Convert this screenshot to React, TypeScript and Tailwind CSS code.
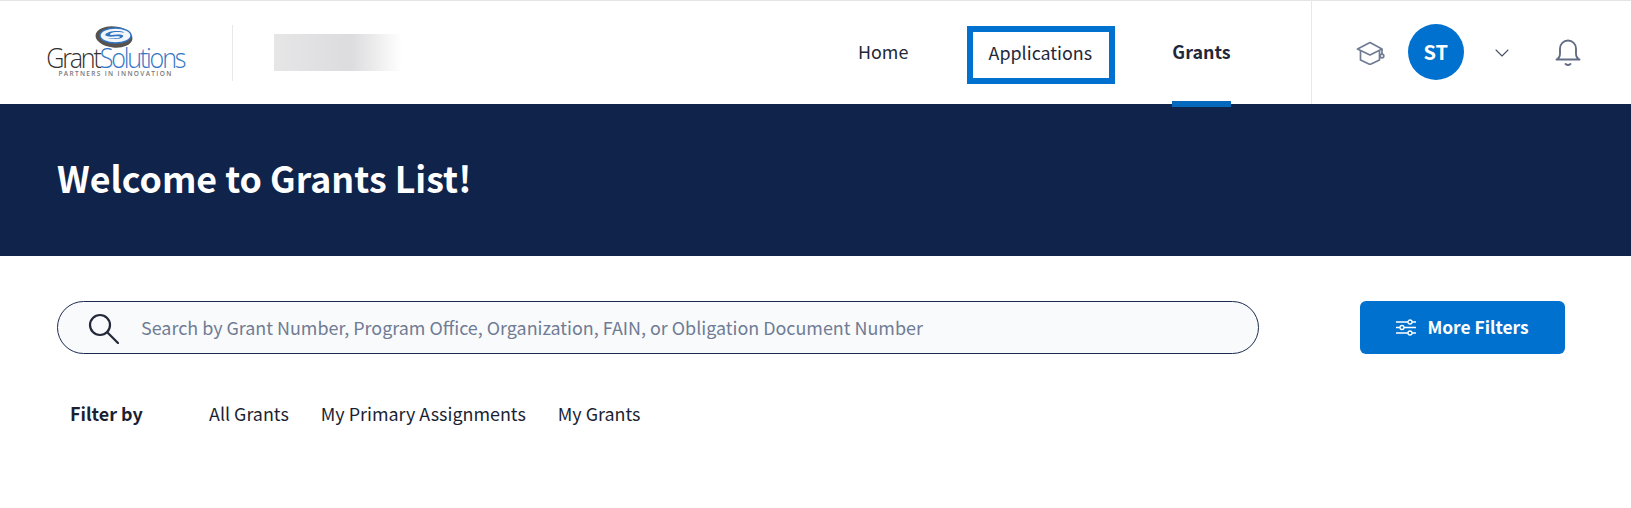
import { ChevronDown } from 'lucide-react';

const bodyFont = "font-['Noto_Sans_CJK_SC','Source_Sans_Pro',sans-serif]";

function Logo() {
  return (
    <div className="flex flex-col items-center w-[137px] ml-[47px] leading-none">
      <svg width="38" height="22" viewBox="0 0 38 22" className="ml-[-3px] mt-[-1px]">
        <ellipse cx="19" cy="11" rx="18.5" ry="10.5" fill="#57524f" transform="rotate(6 19 11)" />
        <ellipse cx="20.500" cy="9.500" rx="15.500" ry="7.500" fill="#f2f5fa" stroke="#2f74c0" strokeWidth="1.400" />
        <path d="M10 9c1-3 8-4.500 14-4 2.500.2 4 .8 5.500 1.800-4-1.200-11-1.300-14 .6-1.200.8-.4 1.500 1.600 1.500 3.500-.1 9-1 10.900.6 1 1.300-1.500 3-6.500 3.500-3.500.3-6.500-.1-8.500-1 4 .7 10.500.5 12-.8.500-.8-1.200-1-3.300-.9-3.500.2-9.500 1.200-11.700-1.300z" fill="#2f74c0" />
      </svg>
      <div className="flex scale-x-[0.93] font-['Open_Sans',sans-serif] font-light text-[27px] tracking-[-2.35px] leading-[20px] h-[20px]">
        <span className="text-[#33302f]">Grant</span>
        <span className="text-[#3577c4]">Solutions</span>
      </div>
      <div className="font-['Open_Sans',sans-serif] font-semibold text-[6.5px] tracking-[1.35px] text-[#77777c] mt-[3px] whitespace-nowrap">
        PARTNERS IN INNOVATION
      </div>
    </div>
  );
}

function GradCap() {
  return (
    <svg width="30" height="24" viewBox="0 0 30 24" fill="none" stroke="#6f7c94" strokeWidth="1.700" strokeLinejoin="round">
      <path d="M14 1.500 1.500 8 14 14 26 8z" />
      <path d="M4.500 10v9L14 23.500l9.500-4.500v-9" />
      <path d="M26 8v5" />
      <circle cx="26" cy="15" r="1.800" />
    </svg>
  );
}

function Bell() {
  return (
    <svg width="26" height="28" viewBox="0 0 26 28" fill="none" stroke="#626d85" strokeWidth="1.900" strokeLinecap="round" strokeLinejoin="round">
      <path d="M1.500 20.500c2-1 3.500-2.500 3.500-6V9.500C5 5 8.500 1.500 13 1.500S21 5 21 9.500v5c0 3.500 1.500 5 3.500 6z" />
      <path d="M10.500 25c1.500 1.200 3.500 1.200 5 0" />
    </svg>
  );
}

function SearchIcon() {
  return (
    <svg width="32" height="32" viewBox="0 0 32 32" fill="none" stroke="#22273a" strokeWidth="2.200" strokeLinecap="round">
      <circle cx="13" cy="13" r="10" />
      <path d="M20.500 20.500 31 31" />
    </svg>
  );
}

function SlidersIcon() {
  return (
    <svg width="20" height="17" viewBox="0 0 20 17" fill="none" stroke="#ffffff" strokeWidth="1.300">
      <path d="M0 3h12M16 3h4M0 8.500h4M8 8.500h12M0 14h12M16 14h4" />
      <circle cx="14" cy="3" r="2" />
      <circle cx="6" cy="8.500" r="2" />
      <circle cx="14" cy="14" r="2" />
    </svg>
  );
}

export default function App() {
  return (
    <div className={`min-h-[508px] bg-white text-[#1b1f33] ${bodyFont}`}>
      <header className="relative flex items-center h-[104px] border-t border-[#e4e4e4] bg-white">
        <Logo />
        <div className="w-px h-[56px] bg-[#e8e8e8] ml-[48px]" />
        <div className="w-[128px] h-[37px] ml-[41px] bg-linear-to-r from-[#e6e6e7] via-[#dcdcde] via-60% to-white" />

        <nav className="flex items-center ml-[456px] text-[17.9px] text-[#22273a]">
          <a className="mr-[59px] mt-[-2px]" href="#">Home</a>
          <a className="flex items-center justify-center w-[148px] h-[58px] border-[6px] border-[#0071ce] mt-[5px] pb-[5px] pr-[2px]" href="#">Applications</a>
          <a className="relative ml-[57px] font-bold flex items-center h-[58px] mt-[-2px]" href="#">
            Grants
            <span className="absolute left-0 right-0 top-[78px] h-[6px] bg-[#0469bd]" />
          </a>
        </nav>

        <div className="self-stretch w-px bg-[#e8e8e8] ml-[80px] mt-[-1px]" />
        <div className="flex items-center ml-[44px]">
          <GradCap />
          <div className="flex items-center justify-center w-[56px] h-[56px] ml-[22px] rounded-full bg-[#0071ce] text-white text-[20px] font-bold mt-[-2px]">ST</div>
          <ChevronDown className="ml-[26px] text-[#4a5064]" size={24} strokeWidth={1.100} />
          <div className="ml-[41px]"><Bell /></div>
        </div>
      </header>

      <section className="flex items-center h-[152px] pl-[57px] bg-[#0f234b]">
        <h1 className="text-white text-[35.75px] font-bold leading-none mt-[-5px]">Welcome to Grants List!</h1>
      </section>

      <div className="flex items-center mt-[45px] pl-[57px]">
        <div className="flex items-center w-[1202px] h-[53px] rounded-full border border-[#1b2a4e] bg-[#f9fafc] pl-[29px]">
          <SearchIcon />
          <span className="ml-[22px] text-[17.92px] text-[#6f7c94]">Search by Grant Number, Program Office, Organization, FAIN, or Obligation Document Number</span>
        </div>
        <button className="flex items-center justify-center gap-[11px] w-[205px] h-[53px] ml-[101px] rounded-[6px] bg-[#0071ce] text-white text-[17.4px] font-bold">
          <SlidersIcon />
          More Filters
        </button>
      </div>

      <div className="flex items-center mt-[46px] pl-[70px] text-[17.92px] h-[26px]">
        <span className="font-bold w-[139px]">Filter by</span>
        <div className="flex gap-[32px]">
          <a href="#">All Grants</a>
          <a href="#">My Primary Assignments</a>
          <a href="#">My Grants</a>
        </div>
      </div>
    </div>
  );
}
